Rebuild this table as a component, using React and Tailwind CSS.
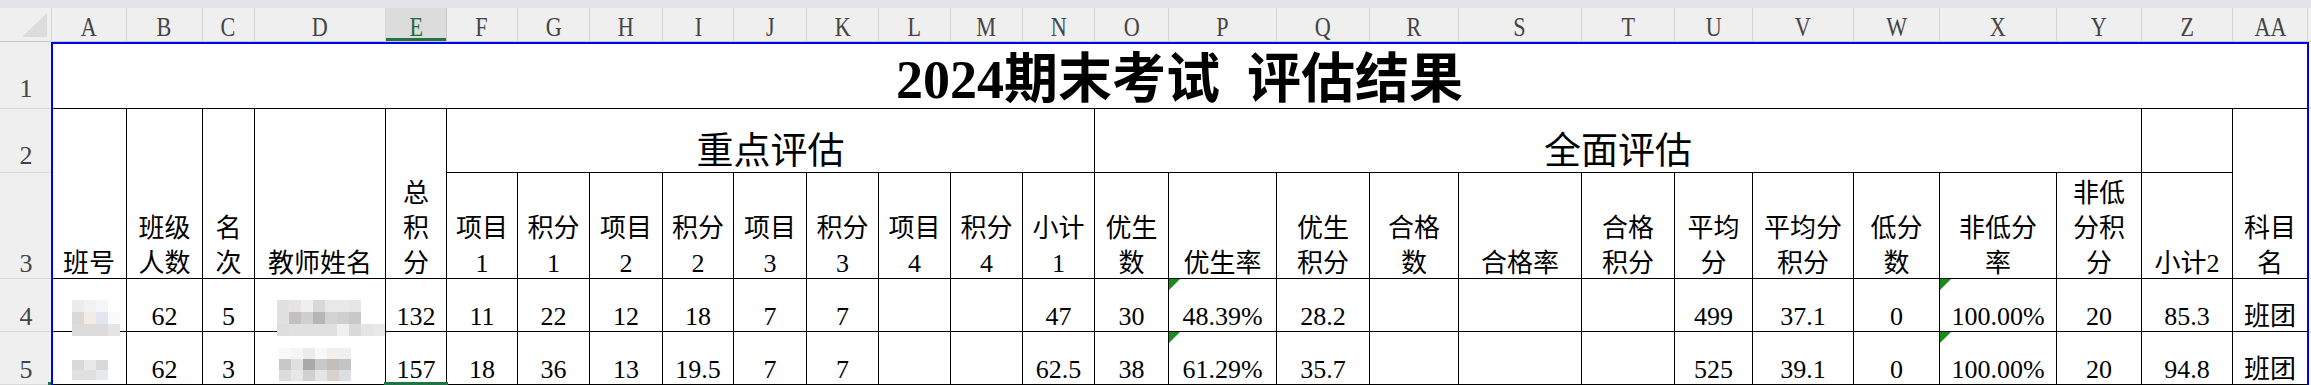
import React from "react";

const letters = ["A","B","C","D","E","F","G","H","I","J","K","L","M","N","O","P","Q","R","S","T","U","V","W","X","Y","Z","AA"];

const row4 = ["", "62", "5", "", "132", "11", "22", "12", "18", "7", "7", "", "", "47", "30", "48.39%", "28.2", "", "", "", "499", "37.1", "0", "100.00%", "20", "85.3", "班团"];
const row5 = ["", "62", "3", "", "157", "18", "36", "13", "19.5", "7", "7", "", "", "62.5", "38", "61.29%", "35.7", "", "", "", "525", "39.1", "0", "100.00%", "20", "94.8", "班团"];

const row3 = [
  ["项目", "1"], ["积分", "1"], ["项目", "2"], ["积分", "2"], ["项目", "3"], ["积分", "3"],
  ["项目", "4"], ["积分", "4"], ["小计", "1"], ["优生", "数"], ["优生率"], ["优生", "积分"],
  ["合格", "数"], ["合格率"], ["合格", "积分"], ["平均", "分"], ["平均分", "积分"], ["低分", "数"],
  ["非低分", "率"], ["非低", "分积", "分"], ["小计2"],
];

function ColHead({ label, selected }) {
  if (selected) {
    return (
      <div className="flex items-end justify-center bg-[#dcdcdc] border-r border-r-[#c8c8c8] border-b border-b-[#c6c6c6] text-[#1e6b41] shadow-[inset_0_-3px_0_#217346]">
        <span className="inline-block scale-x-[0.82] text-[27px] leading-[30px] -mb-[1px]">{label}</span>
      </div>
    );
  }
  return (
    <div className="flex items-end justify-center bg-[#efefef] border-r border-r-[#d5d5d5] border-b border-b-[#c6c6c6] text-[#444444]">
      <span className="inline-block scale-x-[0.82] text-[27px] leading-[30px] -mb-[1px]">{label}</span>
    </div>
  );
}

function RowHead({ n, cls }) {
  return (
    <div className="flex items-end justify-center bg-[#efefef] border-b border-b-[#d9d9d9] text-[#444444] text-[26px]">
      <span className={"leading-[30px] " + cls}>{n}</span>
    </div>
  );
}

function Tri() {
  return (
    <svg className="absolute left-0 top-0" width="11" height="11" viewBox="0 0 11 11">
      <polygon points="0,0 11,0 0,11" fill="#1a8a1a" />
    </svg>
  );
}

function Cell({ lines = [], className = "", tri = false }) {
  return (
    <div className={"relative flex items-end justify-center border-r border-b border-black bg-white text-black text-[26px] " + className}>
      {tri && <Tri />}
      <div className="flex flex-col items-center leading-[35px] -mb-[3px] whitespace-nowrap">
        {lines.map((l, i) => (
          <div key={i}>{l}</div>
        ))}
      </div>
    </div>
  );
}

function Mosaic({ className, rows, bh }) {
  return (
    <div className={"absolute flex flex-col " + className}>
      {rows.map((r, i) => (
        <div key={i} className="flex">
          {r.map((c, j) => (
            <div key={j} className={"w-[12px] " + bh + " " + c} />
          ))}
        </div>
      ))}
    </div>
  );
}

export default function App() {
  return (
    <div className="relative w-[2311px] h-[385px] overflow-hidden bg-white font-['Liberation_Serif','Noto_Sans_CJK_SC',serif]">
      <div className="h-[8px] bg-[#e3e5e8]" />
      <div className="flex">
        <div className="grid w-[2308px] grid-cols-[52px_75px_76px_52px_131px_61px_71px_72px_73px_71px_73px_72px_72px_72px_72px_74px_108px_93px_89px_123px_93px_78px_101px_86px_117px_85px_91px_75px] grid-rows-[34px_67px_64px_106px_53px_53px]">
          {/* header row */}
          <div className="relative bg-[#efefef] border-r border-r-[#d5d5d5] border-b border-b-[#c6c6c6]">
            <svg className="absolute left-[22px] top-[5px]" width="25" height="24" viewBox="0 0 25 24">
              <polygon points="25,0 25,24 0,24" fill="#dcdcdc" />
            </svg>
          </div>
          {letters.map((l) => (
            <ColHead key={l} label={l} selected={l === "E"} />
          ))}

          {/* row 1 */}
          <RowHead n="1" cls="mb-[4px]" />
          <div className="col-span-27 flex items-end justify-center border-r border-b border-black bg-white text-black">
            <span className="text-[54px] font-bold leading-[60px] -mb-[2px] whitespace-nowrap">
              2024期末考试<span className="inline-block w-[27px]" />评估结果
            </span>
          </div>

          {/* row 2 */}
          <RowHead n="2" cls="mb-[1px]" />
          <Cell className="row-span-2" lines={["班号"]} />
          <Cell className="row-span-2" lines={["班级", "人数"]} />
          <Cell className="row-span-2" lines={["名", "次"]} />
          <Cell className="row-span-2" lines={["教师姓名"]} />
          <Cell className="row-span-2" lines={["总", "积", "分"]} />
          <div className="col-span-9 flex items-end justify-center border-r border-b border-black bg-white text-black">
            <span className="text-[37px] leading-[40px]">重点评估</span>
          </div>
          <div className="col-span-11 flex items-end justify-center border-r border-b border-black bg-white text-black">
            <span className="text-[37px] leading-[40px]">全面评估</span>
          </div>
          <Cell />
          <Cell className="row-span-2" lines={["科目", "名"]} />

          {/* row 3 */}
          <RowHead n="3" cls="-mb-[1px]" />
          {row3.map((ls, i) => (
            <Cell key={i} lines={ls} />
          ))}

          {/* row 4 */}
          <RowHead n="4" cls="-mb-[1px]" />
          {row4.map((v, i) => (
            <Cell key={i} lines={v ? [v] : []} tri={i === 15 || i === 23} />
          ))}

          {/* row 5 */}
          <RowHead n="5" cls="-mb-[1px]" />
          {row5.map((v, i) => (
            <Cell key={i} lines={v ? [v] : []} tri={i === 15 || i === 23} />
          ))}
        </div>
        <div className="flex-1">
          <div className="h-[34px] bg-[#efefef] border-b border-b-[#c6c6c6]" />
        </div>
      </div>

      {/* print-area frame */}
      <div className="pointer-events-none absolute left-[51px] top-[42px] w-[2258px] h-[400px] border-l-2 border-t-2 border-r-2 border-[#0000f0]" />

      {/* blurred cells */}
      <Mosaic
        className="left-[72px] top-[300px]"
        bh="h-[12px]"
        rows={[
          ["bg-[#ececec]", "bg-[#f2f2f2]", "bg-[#f4f6f9]", "bg-transparent"],
          ["bg-[#d9d9d9]", "bg-[#f3ebe4]", "bg-[#e1e7f1]", "bg-[#fafafa]"],
          ["bg-[#dcdcdc]", "bg-[#dcdcdc]", "bg-[#dcdcdc]", "bg-[#e4e4e4]"],
        ]}
      />
      <Mosaic
        className="left-[72px] top-[360px]"
        bh="h-[10px]"
        rows={[
          ["bg-[#d9d9d9]", "bg-[#e9e9e9]", "bg-[#d9d9dc]"],
          ["bg-[#e0e0e0]", "bg-[#e0e0e0]", "bg-[#e8e9ec]"],
        ]}
      />
      <Mosaic
        className="left-[277px] top-[300px]"
        bh="h-[12px]"
        rows={[
          ["bg-[#e0e0e0]", "bg-[#e4e4e4]", "bg-[#f0f0f2]", "bg-[#d8d8d8]", "bg-[#e8e8e8]", "bg-[#e8e8e8]", "bg-[#e6e6e6]", "bg-transparent", "bg-transparent"],
          ["bg-[#e0e0e0]", "bg-[#c3c0bf]", "bg-[#cfcfcf]", "bg-[#b6b6b6]", "bg-[#d2d2d2]", "bg-[#cfcfcf]", "bg-[#c8c8c8]", "bg-transparent", "bg-transparent"],
          ["bg-[#dedede]", "bg-[#e0e0e0]", "bg-[#e0e0e0]", "bg-[#e0e0e0]", "bg-[#e0e0e0]", "bg-[#f0f0f0]", "bg-[#dadada]", "bg-[#e5e5e5]", "bg-[#e8e8e8]"],
        ]}
      />
      <Mosaic
        className="left-[279px] top-[348px]"
        bh="h-[11px]"
        rows={[
          ["bg-[#f8f8f8]", "bg-[#f5f5f5]", "bg-[#ececec]", "bg-[#f8f8f8]", "bg-[#f0f0f0]", "bg-[#f0f0f0]", "bg-transparent"],
          ["bg-[#c8c8c8]", "bg-[#e0e0e0]", "bg-[#a9a9a9]", "bg-[#c8c8c8]", "bg-[#c4beba]", "bg-[#c4c4c8]", "bg-transparent"],
          ["bg-[#dcdcdc]", "bg-[#e8e8e8]", "bg-[#d0d0d0]", "bg-[#e4e4e4]", "bg-[#d8d2ce]", "bg-[#dcdee4]", "bg-transparent"],
        ]}
      />

      {/* selection of E6 */}
      <div className="absolute left-[384px] top-[382px] w-[64px] h-[3px] bg-[#217346]" />
      <div className="absolute left-[48px] top-[382px] w-[3px] h-[3px] bg-[#217346]" />
    </div>
  );
}
